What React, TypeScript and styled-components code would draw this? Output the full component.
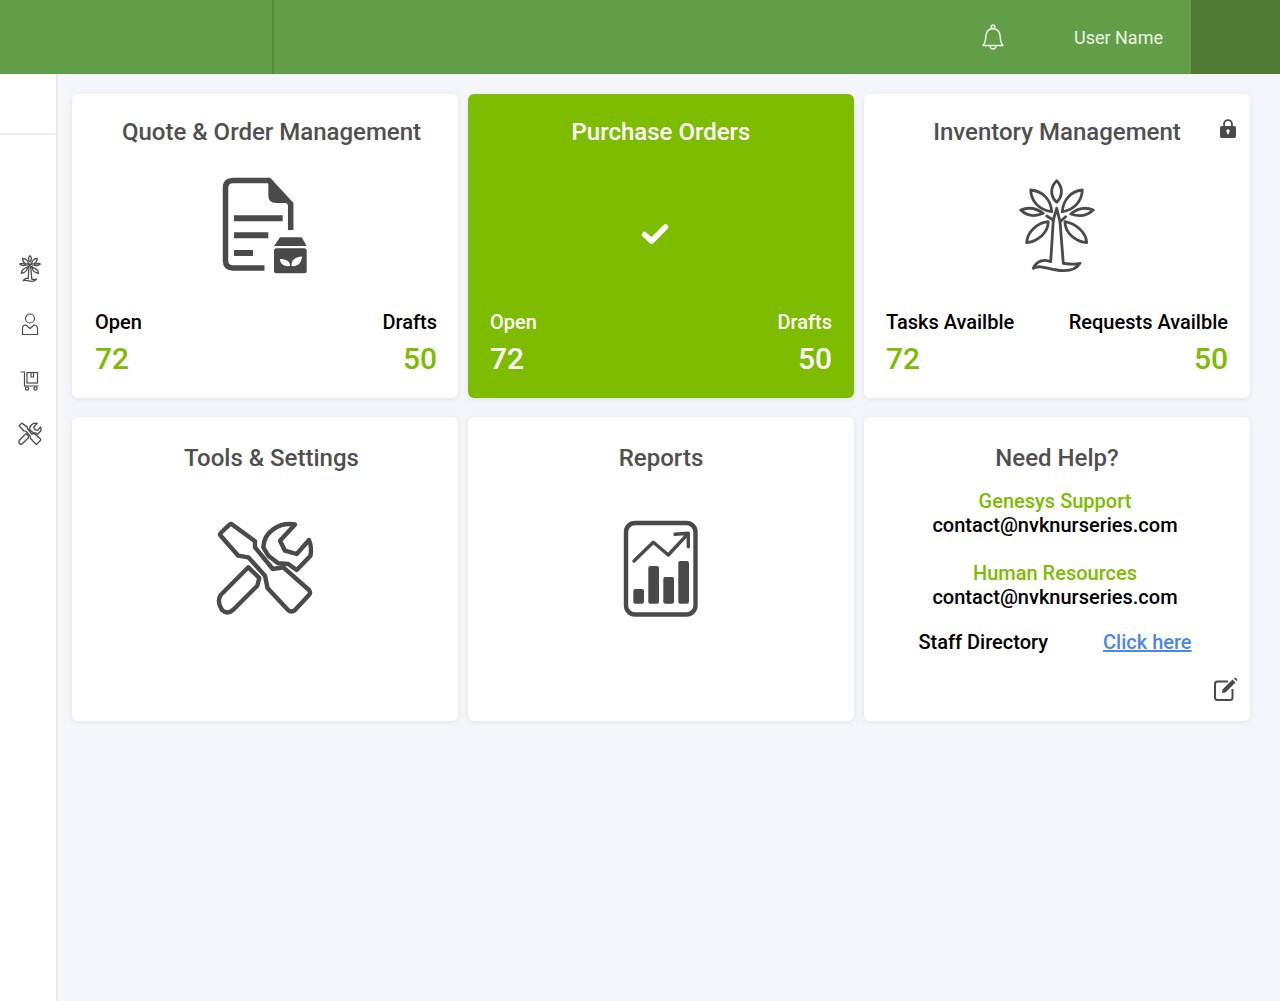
import styled, { createGlobalStyle } from "styled-components";

const GlobalStyle = createGlobalStyle`
  html, body {
    margin: 0;
    padding: 0;
    height: 100%;
    background: #f4f6fb;
    font-family: Roboto, "Liberation Sans", sans-serif;
  }
  #root {
    height: 100%;
  }
`;

const Page = styled.div`
  width: 1280px;
  height: 1001px;
  display: flex;
  flex-direction: column;
  overflow: hidden;
`;

const TopBar = styled.header`
  height: 74px;
  flex: none;
  display: flex;
  align-items: stretch;
  background: #629d48;
  color: #eef6e6;
`;

const BrandSlot = styled.div`
  width: 272px;
  flex: none;
  border-right: 2px solid #55893d;
`;

const TopActions = styled.div`
  flex: 1;
  display: flex;
  align-items: center;
  justify-content: flex-end;
  padding-right: 28px;
`;

const BellButton = styled.div`
  display: flex;
  margin-right: 69px;
`;

const UserName = styled.span`
  font-size: 18px;
  line-height: 24px;
  padding-top: 2px;
`;

const UserBlock = styled.div`
  width: 89px;
  flex: none;
  background: #4e7a35;
`;

const Body = styled.div`
  flex: 1;
  display: flex;
  min-height: 0;
`;

const SideBar = styled.aside`
  width: 56px;
  flex: none;
  background: #ffffff;
  border-right: 2px solid #e7e8f0;
`;

const SideHead = styled.div`
  height: 59px;
  border-bottom: 2px solid #eeeff3;
`;

const SideNav = styled.nav`
  display: flex;
  flex-direction: column;
  align-items: center;
  padding: 119px 0 0 4px;
`;

const SideItem = styled.div<{ $height: number }>`
  height: ${(p) => p.$height}px;
  display: flex;
  justify-content: center;
  align-items: flex-start;
  color: #4b4b4b;
`;

const Main = styled.main`
  flex: 1;
  padding: 20px 30px 0 14px;
`;

const CardGrid = styled.div`
  display: grid;
  grid-template-columns: repeat(3, 386px);
  grid-auto-rows: 304px;
  column-gap: 10px;
  row-gap: 19px;
`;

const Card = styled.section<{ $active?: boolean; $lower?: boolean }>`
  position: relative;
  display: flex;
  flex-direction: column;
  box-sizing: border-box;
  padding: ${(p) => (p.$lower ? 25 : 22)}px 22px 0;
  border-radius: 6px;
  background: ${(p) => (p.$active ? "#7dbc00" : "#ffffff")};
  color: ${(p) => (p.$active ? "#ffffff" : "#000000")};
  box-shadow: 0 1px 5px rgba(60, 70, 110, 0.1);
`;

const CardTitle = styled.h2<{ $active?: boolean; $shift?: number }>`
  margin: 0;
  font-size: 24px;
  line-height: 32px;
  font-weight: 500;
  text-align: center;
  padding-left: ${(p) => p.$shift ?? 0}px;
  color: ${(p) => (p.$active ? "#ffffff" : "#4f4f4f")};
`;

const IconArea = styled.div<{ $top: number; $right?: number }>`
  height: 112px;
  padding: ${(p) => p.$top}px ${(p) => p.$right ?? 0}px 0 0;
  box-sizing: border-box;
  display: flex;
  justify-content: center;
  align-items: flex-start;
  color: #4a4a4a;
`;

const Stats = styled.div<{ $shift?: number }>`
  display: flex;
  justify-content: space-between;
  margin: 48px ${(p) => -(p.$shift ?? 0)}px 0 ${(p) => p.$shift ?? 0}px;
`;

const Stat = styled.div<{ $right?: boolean }>`
  display: flex;
  flex-direction: column;
  text-align: ${(p) => (p.$right ? "right" : "left")};
`;

const StatLabel = styled.span`
  font-size: 20px;
  line-height: 28px;
  font-weight: 500;
`;

const StatValue = styled.span<{ $active?: boolean }>`
  font-size: 30px;
  line-height: 45px;
  font-weight: 500;
  color: ${(p) => (p.$active ? "#ffffff" : "#7dbc00")};
`;

const CornerIcon = styled.div<{ $place: "top" | "bottom" }>`
  position: absolute;
  display: flex;
  color: #4a4a4a;
  ${(p) => (p.$place === "top" ? "top: 25px; right: 14px;" : "bottom: 20px; right: 12px;")}
`;

const HelpBlock = styled.div`
  display: flex;
  flex-direction: column;
  align-items: center;
  margin-top: 15px;
  padding-right: 4px;
`;

const HelpGroup = styled.div`
  display: flex;
  flex-direction: column;
  align-items: center;
  margin-bottom: 24px;
  font-size: 20px;
  line-height: 24px;
  font-weight: 500;
`;

const HelpName = styled.span`
  color: #7dbc00;
`;

const DirectoryRow = styled.div`
  display: flex;
  gap: 55px;
  font-size: 20px;
  line-height: 24px;
  font-weight: 500;
  margin-top: -3px;
`;

const HelpLink = styled.a`
  color: #4a86e8;
  text-decoration: underline;
`;

const FileIcon = () => (
  <svg width="90" height="100" viewBox="0 0 90 100" fill="none" stroke="currentColor">
    <path d="M44.5 93H13Q5.5 93 5.5 85.5V13Q5.5 5.500 13 5.500H49L70.700 29V55" strokeWidth="5.500" />
    <path d="M48.300 4H50L73 28H56Q48.300 28 48.300 20Z" fill="currentColor" stroke="none" />
    <path d="M14 43.300H62.700M14 60.300H48.300M14 78H33" strokeWidth="6" />
    <path d="M60 62.300H81.700L86.700 71H54Z" fill="currentColor" stroke="none" />
    <rect x="54" y="73.300" width="32.700" height="25" rx="2.500" fill="currentColor" stroke="none" />
    <path d="M70 91C63 92 60 88 60 84C66 84 70 86 70 91Z" fill="#fff" stroke="none" />
    <path d="M71.500 91C71 85 76 81.500 82 81.500C82 87 78 92 71.500 91Z" fill="#fff" stroke="none" />
  </svg>
);

const TreeIcon = ({ size = 84, weight = 2.8 }: { size?: number; weight?: number }) => (
  <svg
    width={size}
    height={(size * 100) / 84}
    viewBox="0 0 84 100"
    fill="none"
    stroke="currentColor"
    strokeWidth={weight}
    strokeLinejoin="round"
    strokeLinecap="round"
  >
    <path d="M41.700 5.700C35 12 35 21 41.700 27.300C48 21 48 12 41.700 5.700Z" />
    <path d="M15.700 15C16 26 24 35 36.700 36.700C36 25 28 16 15.700 15Z" />
    <path d="M67.300 15C67 26 59 35 47.300 36.700C48 25 56 16 67.300 15Z" />
    <path d="M5.700 35C12 41 20 42 28.300 38.300C21 33 13 32 5.700 35Z" />
    <path d="M78.300 35C72 41 64 42 55.700 39C63 33 71 32 78.300 35Z" />
    <path d="M33.300 46.700C22 48 12 57 11.700 67.700C24 66 33 57 33.300 46.700Z" />
    <path d="M50 46.700C61 49 71 57 71.700 67.700C59 66 50 57 50 46.700Z" />
    <path d="M31.700 41L38.300 45L41.700 33.300L45 46.700L50.700 41.700" />
    <path d="M38.300 45L35.700 86.700C30 84 22 85 18.300 93.300C26 89 34 95 48 95.700C56 96 62 93 65 88.300C60 90 54 89 48.300 88.300L45 46.700" />
  </svg>
);

const ToolsIcon = ({ size = 100, weight = 4.4 }: { size?: number; weight?: number }) => (
  <svg
    width={size}
    height={size}
    viewBox="0 0 100 100"
    fill="none"
    stroke="currentColor"
    strokeWidth={weight}
    strokeLinejoin="round"
    strokeLinecap="round"
  >
    <path d="M5.700 16.700Q4.500 15.500 5.700 14L14.500 5.700Q16 4.500 17.500 5.700L40 22.300V28.300L57.700 50L68.300 48.300L94 71Q96 74 94 76L80 91Q76.700 94 73 91L52.500 69L50 56.700L33.300 38.300L23.300 36.700Z" />
    <path d="M33.300 48.300L44.300 59L42.300 66.700L18 91Q12 96 7 91L5 87Q2.500 81 5.700 76Z" />
    <path d="M80 5.500C65 3 49 12 48.300 28.300L53.300 36.700L63.300 44.300L73.300 45L81.700 51L95.500 36.700Q97 28 94 21L81.700 35L70 31.700L65 21.700Z" />
  </svg>
);

const ChartIcon = () => (
  <svg width="82" height="102" viewBox="0 0 82 102" fill="none" stroke="currentColor">
    <rect x="6" y="5" width="69.500" height="91.500" rx="9" strokeWidth="4.400" />
    <rect x="13.300" y="71" width="10.700" height="14.700" rx="2" fill="currentColor" stroke="none" />
    <rect x="28.300" y="48" width="10.700" height="37.700" rx="2" fill="currentColor" stroke="none" />
    <rect x="43.300" y="59" width="10.700" height="26.700" rx="2" fill="currentColor" stroke="none" />
    <rect x="58.300" y="43" width="10.700" height="42.700" rx="2" fill="currentColor" stroke="none" />
    <path d="M14 43L33.300 24.300L48.300 37L68.300 15.300M55 16.300L68.300 15.300V28.700" strokeWidth="3.400" strokeLinecap="round" strokeLinejoin="round" />
  </svg>
);

const BellIcon = () => (
  <svg width="24" height="27" viewBox="0 0 24 27" fill="none" stroke="currentColor" strokeWidth="1.500" strokeLinejoin="round">
    <path d="M2 21.500C4 19.500 4.500 17.500 4.800 13C5 8 7.500 4.700 12 4.700C16.500 4.700 19 8 19.200 13C19.500 17.500 20 19.500 22 21.500Z" />
    <circle cx="12" cy="2.800" r="1.800" />
    <path d="M9 22C9.300 26 14.700 26 15 22" />
  </svg>
);

const UserIcon = () => (
  <svg width="18" height="23" viewBox="0 0 18 23" fill="none" stroke="currentColor" strokeWidth="1.200">
    <circle cx="9" cy="5.500" r="4.500" />
    <path d="M1.500 21.500V15.500Q1.500 12 5 12L9 15.500L13 12Q16.500 12 16.500 15.500V21.500Z" strokeLinejoin="round" />
  </svg>
);

const CartIcon = () => (
  <svg width="20" height="20" viewBox="0 0 20 20" fill="none" stroke="currentColor" strokeWidth="1.200">
    <path d="M0.500 1H4.500V15H18.500" />
    <rect x="7" y="1.500" width="10.500" height="10.500" />
    <path d="M11 1.500V6H13.500V1.500" />
    <circle cx="7" cy="17.500" r="1.600" />
    <circle cx="15.500" cy="17.500" r="1.600" />
  </svg>
);

const LockIcon = () => (
  <svg width="16" height="19" viewBox="0 0 16 19" fill="currentColor">
    <path d="M1.700 7H3.200V5A4.800 4.800 0 0 1 12.800 5V7H14.300Q16 7 16 8.700V17.300Q16 19 14.300 19H1.700Q0 19 0 17.300V8.700Q0 7 1.700 7ZM5 7H11V5A3 3 0 0 0 5 5Z" fillRule="evenodd" />
    <circle cx="8" cy="12" r="1.700" fill="#fff" />
    <rect x="7.200" y="12" width="1.600" height="3.200" fill="#fff" />
  </svg>
);

const EditIcon = () => (
  <svg width="24" height="24" viewBox="0 0 24 24" fill="none">
    <path d="M14 4.500H3.500Q1 4.500 1 7V20.500Q1 23 3.500 23H16Q18.500 23 18.500 20.500V12" stroke="currentColor" strokeWidth="2" />
    <path d="M8.500 12.500L18.500 2.500L21.500 5.500L11.500 15.500L8 16Z" fill="currentColor" />
    <path d="M19.700 1.300Q21 0 22.300 1.300L22.800 1.800Q24 3 22.700 4.300Z" fill="currentColor" />
  </svg>
);

const CheckIcon = () => (
  <svg width="28" height="22" viewBox="0 0 28 22" fill="none" stroke="#fff" strokeWidth="5.500" strokeLinecap="round" strokeLinejoin="round">
    <path d="M3.500 11.500L10.500 18L24.500 4" />
  </svg>
);

const App = () => {
  return (
    <Page>
      <GlobalStyle />
      <TopBar>
        <BrandSlot />
        <TopActions>
          <BellButton>
            <BellIcon />
          </BellButton>
          <UserName>User Name</UserName>
        </TopActions>
        <UserBlock />
      </TopBar>
      <Body>
        <SideBar>
          <SideHead />
          <SideNav>
            <SideItem $height={59}>
              <TreeIcon size={24} weight={4.5} />
            </SideItem>
            <SideItem $height={58}>
              <UserIcon />
            </SideItem>
            <SideItem $height={51}>
              <CartIcon />
            </SideItem>
            <SideItem $height={30}>
              <ToolsIcon size={24} weight={5.5} />
            </SideItem>
          </SideNav>
        </SideBar>
        <Main>
          <CardGrid>
            <Card>
              <CardTitle $shift={13}>Quote &amp; Order Management</CardTitle>
              <IconArea $top={27}>
                <FileIcon />
              </IconArea>
              <Stats $shift={1}>
                <Stat>
                  <StatLabel>Open</StatLabel>
                  <StatValue>72</StatValue>
                </Stat>
                <Stat $right>
                  <StatLabel>Drafts</StatLabel>
                  <StatValue>50</StatValue>
                </Stat>
              </Stats>
            </Card>
            <Card $active>
              <CardTitle $active>Purchase Orders</CardTitle>
              <IconArea $top={75} $right={12}>
                <CheckIcon />
              </IconArea>
              <Stats>
                <Stat>
                  <StatLabel>Open</StatLabel>
                  <StatValue $active>72</StatValue>
                </Stat>
                <Stat $right>
                  <StatLabel>Drafts</StatLabel>
                  <StatValue $active>50</StatValue>
                </Stat>
              </Stats>
            </Card>
            <Card>
              <CardTitle>Inventory Management</CardTitle>
              <CornerIcon $place="top">
                <LockIcon />
              </CornerIcon>
              <IconArea $top={27}>
                <TreeIcon />
              </IconArea>
              <Stats>
                <Stat>
                  <StatLabel>Tasks Availble</StatLabel>
                  <StatValue>72</StatValue>
                </Stat>
                <Stat $right>
                  <StatLabel>Requests Availble</StatLabel>
                  <StatValue>50</StatValue>
                </Stat>
              </Stats>
            </Card>
            <Card $lower>
              <CardTitle $shift={13}>Tools &amp; Settings</CardTitle>
              <IconArea $top={45}>
                <ToolsIcon />
              </IconArea>
            </Card>
            <Card $lower>
              <CardTitle>Reports</CardTitle>
              <IconArea $top={44}>
                <ChartIcon />
              </IconArea>
            </Card>
            <Card $lower>
              <CardTitle>Need Help?</CardTitle>
              <HelpBlock>
                <HelpGroup>
                  <HelpName>Genesys Support</HelpName>
                  <span>contact@nvknurseries.com</span>
                </HelpGroup>
                <HelpGroup>
                  <HelpName>Human Resources</HelpName>
                  <span>contact@nvknurseries.com</span>
                </HelpGroup>
                <DirectoryRow>
                  <span>Staff Directory</span>
                  <HelpLink href="#">Click here</HelpLink>
                </DirectoryRow>
              </HelpBlock>
              <CornerIcon $place="bottom">
                <EditIcon />
              </CornerIcon>
            </Card>
          </CardGrid>
        </Main>
      </Body>
    </Page>
  );
};

export default App;
